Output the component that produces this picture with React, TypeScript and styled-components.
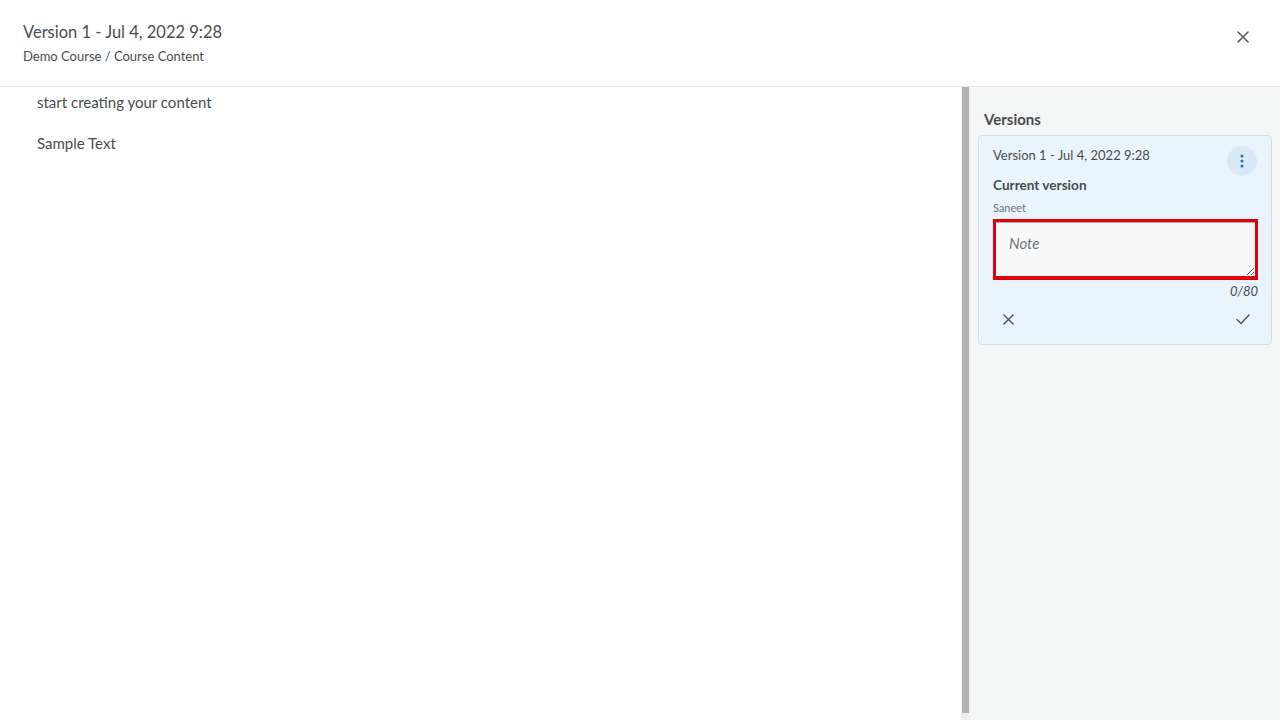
import React from "react";
import styled, { createGlobalStyle } from "styled-components";

const Global = createGlobalStyle`
  html, body { margin: 0; padding: 0; height: 100%; }
  body { font-family: Lato, "Open Sans", sans-serif; color: #494c4e; background: #fff; overflow: hidden; }
  #root { height: 100%; }
`;

const Page = styled.div`
  height: 720px;
  display: flex;
  flex-direction: column;
`;

const Header = styled.header`
  flex: none;
  box-sizing: border-box;
  border-bottom: 1px solid #e3e6e8;
  display: flex;
  align-items: flex-start;
  justify-content: space-between;
  padding: 20px 25px 0 23px;
  height: 87px;
`;

const TitleBlock = styled.div`
  display: flex;
  flex-direction: column;
`;

const Title = styled.h1`
  margin: 0;
  font-size: 16.5px;
  font-weight: 400;
  line-height: 24px;
  color: #494c4e;
`;

const Subtitle = styled.div`
  font-size: 13px;
  line-height: 18px;
  margin-top: 3px;
  color: #494c4e;
`;

const IconButton = styled.button`
  border: none;
  background: transparent;
  padding: 0;
  width: 24px;
  height: 24px;
  margin-top: 5px;
  display: flex;
  align-items: center;
  justify-content: center;
  color: #565a5c;
  cursor: pointer;
`;

const Body = styled.div`
  flex: 1;
  display: flex;
  min-height: 0;
`;

const Content = styled.main`
  flex: 1;
  padding: 5px 0 0 37px;
  font-size: 15px;
  line-height: 20px;
`;

const Para = styled.p`
  margin: 0 0 21px;
`;

const Track = styled.div`
  width: 9px;
  flex: none;
  background: #eeeeee;
  display: flex;
  justify-content: center;
  padding-bottom: 7px;
  box-sizing: border-box;
`;

const Thumb = styled.div`
  width: 7px;
  background: #b2b2b2;
  height: 100%;
`;

const Side = styled.aside`
  width: 310px;
  flex: none;
  background: #f5f6f6;
  box-sizing: border-box;
  padding: 22px 8px 0 8px;
`;

const SideHeading = styled.h2`
  margin: 0 0 6px 6px;
  font-size: 15px;
  font-weight: 700;
  line-height: 20px;
  color: #494c4e;
`;

const Card = styled.div`
  background: #eaf4fd;
  border: 1px solid #cde0ef;
  border-radius: 4px;
  padding: 9px 14px 14px 14px;
`;

const CardTop = styled.div`
  display: flex;
  justify-content: space-between;
  align-items: flex-start;
`;

const CardTitle = styled.div`
  font-size: 13px;
  line-height: 20px;
`;

const Kebab = styled.button`
  width: 30px;
  height: 30px;
  margin-top: 1px;
  border-radius: 50%;
  border: none;
  background: #d9e9f8;
  display: flex;
  align-items: center;
  justify-content: center;
  padding: 0;
`;

const Current = styled.div`
  font-size: 13.6px;
  font-weight: 700;
  line-height: 18px;
  margin-top: 0;
`;

const Author = styled.div`
  font-size: 11px;
  line-height: 14px;
  margin-top: 7px;
  color: #6e7376;
`;

const Highlight = styled.div`
  margin-top: 4px;
  border: 3px solid #e2000c;
  border-bottom-width: 4px;
  width: 265px;
  box-sizing: border-box;
`;

const NoteArea = styled.textarea`
  display: block;
  width: 100%;
  height: 54px;
  box-sizing: border-box;
  resize: vertical;
  border: none;
  border-top: 1px solid #a9adb0;
  background: #f8f8f8;
  padding: 11px 13px;
  font-family: Lato, sans-serif;
  font-size: 15px;
  color: #494c4e;
  outline: none;
  &::placeholder {
    font-style: italic;
    color: #6e7376;
  }
`;

const Counter = styled.div`
  text-align: right;
  font-size: 13px;
  font-style: italic;
  line-height: 18px;
  margin-top: 2px;
  width: 265px;
`;

const Actions = styled.div`
  display: flex;
  justify-content: space-between;
  width: 265px;
  margin-top: 8px;
`;

const SmallIcon = styled.button`
  border: none;
  background: transparent;
  width: 30px;
  height: 22px;
  padding: 0;
  display: flex;
  align-items: center;
  justify-content: center;
  color: #565a5c;
`;

const CloseIcon = ({ size = 12 }: { size?: number }) => (
  <svg width={size} height={size} viewBox="0 0 12 12">
    <path d="M1 1 L11 11 M11 1 L1 11" stroke="currentColor" strokeWidth="1.6" strokeLinecap="round" />
  </svg>
);

const CheckIcon = () => (
  <svg width="14" height="11" viewBox="0 0 14 11">
    <path d="M1 5.5 L5 9.5 L13 1" stroke="currentColor" strokeWidth="1.5" fill="none" strokeLinecap="round" strokeLinejoin="round" />
  </svg>
);

const KebabIcon = () => (
  <svg width="4" height="14" viewBox="0 0 4 14">
    <circle cx="2" cy="2" r="1.5" fill="#2a6db5" />
    <circle cx="2" cy="7" r="1.5" fill="#2a6db5" />
    <circle cx="2" cy="12" r="1.5" fill="#2a6db5" />
  </svg>
);

export default function App() {
  return (
    <>
      <Global />
      <Page>
        <Header>
          <TitleBlock>
            <Title>Version 1 - Jul 4, 2022 9:28</Title>
            <Subtitle>Demo Course / Course Content</Subtitle>
          </TitleBlock>
          <IconButton aria-label="Close">
            <CloseIcon size={12} />
          </IconButton>
        </Header>
        <Body>
          <Content>
            <Para>start creating your content</Para>
            <Para>Sample Text</Para>
          </Content>
          <Track>
            <Thumb />
          </Track>
          <Side>
            <SideHeading>Versions</SideHeading>
            <Card>
              <CardTop>
                <CardTitle>Version 1 - Jul 4, 2022 9:28</CardTitle>
                <Kebab aria-label="More actions">
                  <KebabIcon />
                </Kebab>
              </CardTop>
              <Current>Current version</Current>
              <Author>Saneet</Author>
              <Highlight>
                <NoteArea placeholder="Note" />
              </Highlight>
              <Counter>0/80</Counter>
              <Actions>
                <SmallIcon aria-label="Cancel">
                  <CloseIcon size={11} />
                </SmallIcon>
                <SmallIcon aria-label="Save">
                  <CheckIcon />
                </SmallIcon>
              </Actions>
            </Card>
          </Side>
        </Body>
      </Page>
    </>
  );
}
